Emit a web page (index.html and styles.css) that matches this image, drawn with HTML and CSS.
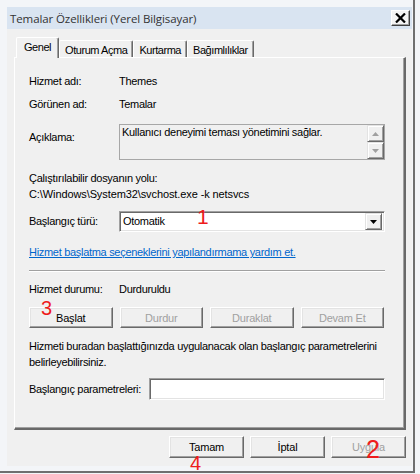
FILE: index.html
```html
<!DOCTYPE html>
<html lang="tr">
<head>
    <meta charset="UTF-8">
    <title>Temalar Özellikleri (Yerel Bilgisayar)</title>
    <link rel="stylesheet" href="styles.css">
</head>
<body>
    <div class="window">
        <div class="titlebar">
            <span class="title">Temalar Özellikleri (Yerel Bilgisayar)</span>
            <button class="close">
                <svg width="11" height="10" viewBox="0 0 11 10"><path d="M1 0.5 L10 9.5 M10 0.5 L1 9.5" stroke="#000" stroke-width="2.2"/></svg>
            </button>
        </div>

        <div class="client">
            <div class="tabs">
                <div class="tab active">Genel</div>
                <div class="tab">Oturum Açma</div>
                <div class="tab">Kurtarma</div>
                <div class="tab">Bağımlılıklar</div>
            </div>

            <div class="panel">
                <div class="row first">
                    <span class="label">Hizmet adı:</span>
                    <span>Themes</span>
                </div>
                <div class="row second">
                    <span class="label">Görünen ad:</span>
                    <span>Temalar</span>
                </div>
                <div class="row desc-row">
                    <span class="label desc-label">Açıklama:</span>
                    <div class="desc">
                        <div class="desc-text">Kullanıcı deneyimi teması yönetimini sağlar.</div>
                        <div class="scrollbar">
                            <div class="sb-btn"><svg width="7" height="4" viewBox="0 0 7 4"><path d="M3.5 0 L7 4 L0 4 Z" fill="#a0a0a0"/></svg></div>
                            <div class="sb-btn"><svg width="7" height="4" viewBox="0 0 7 4"><path d="M0 0 L7 0 L3.5 4 Z" fill="#a0a0a0"/></svg></div>
                        </div>
                    </div>
                </div>

                <div class="path-label">Çalıştırılabilir dosyanın yolu:</div>
                <div class="path">C:\Windows\System32\svchost.exe -k netsvcs</div>

                <div class="row combo-row">
                    <span class="label">Başlangıç türü:</span>
                    <div class="combo">
                        <span class="combo-value">Otomatik</span>
                        <div class="combo-btn"><svg width="7" height="4" viewBox="0 0 7 4"><path d="M0 0 L7 0 L3.5 4 Z" fill="#000"/></svg></div>
                    </div>
                </div>

                <a class="help-link" href="#">Hizmet başlatma seçeneklerini yapılandırmama yardım et.</a>

                <div class="separator"></div>

                <div class="row status">
                    <span class="label">Hizmet durumu:</span>
                    <span>Durduruldu</span>
                </div>

                <div class="service-buttons">
                    <button class="btn">Başlat</button>
                    <button class="btn" disabled>Durdur</button>
                    <button class="btn" disabled>Duraklat</button>
                    <button class="btn" disabled>Devam Et</button>
                </div>

                <p class="hint">Hizmeti buradan başlattığınızda uygulanacak olan başlangıç parametrelerini<br>belirleyebilirsiniz.</p>

                <div class="row params">
                    <span class="params-label">Başlangıç parametreleri:</span>
                    <div class="param-input"></div>
                </div>
            </div>

            <div class="dialog-buttons">
                <button class="btn dlg">Tamam</button>
                <button class="btn dlg">İptal</button>
                <button class="btn dlg" disabled>Uygula</button>
            </div>
        </div>

        <span class="mark m1">1</span>
        <span class="mark m2">2</span>
        <span class="mark m3">3</span>
        <span class="mark m4">4</span>
    </div>
</body>
</html>
```

FILE: styles.css
```css
body {
    margin: 0;
    background: #f3f5f8;
    font-family: "Liberation Sans", Arial, sans-serif;
    font-size: 11px;
    letter-spacing: -0.3px;
    color: #000;
}
.window {
    position: relative;
    width: 415px;
    height: 473px;
    box-sizing: border-box;
    padding: 7px 1px 5px 7px;
    background: #f3f5f8;
    border-right: 2px solid #6f6f6f;
    border-bottom: 2px solid #6f6f6f;
}
.titlebar {
    height: 22px;
    background: #d9e4f1;
    display: flex;
    align-items: center;
    justify-content: space-between;
    padding: 0 2px 0 3px;
}
.title {
    font-family: "Open Sans", "Noto Sans", sans-serif;
    font-size: 11.5px;
    color: #333;
    letter-spacing: -0.1px;
}
.close {
    width: 19px;
    height: 16px;
    padding: 0;
    display: flex;
    align-items: center;
    justify-content: center;
    background: #f4f4f4;
    border: 1px solid;
    border-color: #fff #404040 #404040 #fff;
    box-shadow: inset -1px -1px #a0a0a0;
}
.client {
    height: 437px;
    box-sizing: border-box;
    background: #f0f0f0;
    padding: 8px 6px 0 7px;
}
.tabs {
    display: flex;
    align-items: flex-end;
    height: 20px;
    padding-left: 2px;
}
.tab {
    height: 17px;
    line-height: 18px;
    padding: 0 5px;
    letter-spacing: -0.45px;
    border: 1px solid;
    border-color: #fff #696969 transparent #fff;
    border-bottom: none;
    border-radius: 2px 2px 0 0;
    box-sizing: border-box;
    box-shadow: inset -1px 0 #a0a0a0;
    background: #f0f0f0;
}
.tab.active {
    position: relative;
    z-index: 1;
    height: 21px;
    line-height: 18px;
    margin-bottom: -1px;
    padding: 0 7px;
}
.panel {
    height: 373px;
    box-sizing: border-box;
    border: 1px solid;
    border-color: #fff #696969 #696969 #fff;
    border-width: 1px 2px 2px 1px;
    box-shadow: inset -1px -1px #a0a0a0;
    padding: 0 19px 0 14px;
    display: flex;
    flex-direction: column;
}
.row {
    display: flex;
    line-height: 16px;
}
.label {
    width: 90px;
    flex-shrink: 0;
}
.first { margin-top: 15px; }
.second { margin-top: 7px; }
.desc-row {
    margin-top: 12px;
    align-items: flex-start;
}
.desc-label { padding-top: 5px; }
.desc {
    flex: 1;
    height: 36px;
    box-sizing: border-box;
    display: flex;
    border: 1px solid #a7a7a7;
    background: #f0f0f0;
}
.desc-text {
    flex: 1;
    padding: 0 2px;
    line-height: 14px;
}
.scrollbar {
    width: 17px;
    display: flex;
    flex-direction: column;
}
.sb-btn, .combo-btn {
    flex: 1;
    display: flex;
    align-items: center;
    justify-content: center;
    box-sizing: border-box;
    background: #f0f0f0;
    border: 1px solid;
    border-color: #e3e3e3 #696969 #696969 #e3e3e3;
    box-shadow: inset 1px 1px #fff, inset -1px -1px #a0a0a0;
}
.path-label {
    margin-top: 10px;
    line-height: 16px;
}
.path {
    line-height: 16px;
    letter-spacing: -0.1px;
}
.combo-row {
    margin-top: 9px;
    align-items: center;
    line-height: 21px;
}
.combo, .param-input {
    flex: 1;
    height: 21px;
    box-sizing: border-box;
    display: flex;
    align-items: center;
    background: #fff;
    border: 1px solid;
    border-color: #a0a0a0 #fff #fff #a0a0a0;
    box-shadow: inset 1px 1px #696969, inset -1px -1px #e3e3e3;
    padding: 2px;
}
.combo-value {
    flex: 1;
    padding-left: 1px;
}
.combo-btn {
    flex: none;
    width: 17px;
    height: 17px;
}
.help-link {
    margin-top: 12px;
    line-height: 16px;
    color: #0066cc;
    align-self: flex-start;
}
.separator {
    margin-top: 10px;
    height: 1px;
    background: #a0a0a0;
    border-bottom: 1px solid #fff;
}
.status { margin-top: 9px; }
.service-buttons {
    margin-top: 10px;
    display: grid;
    grid-template-columns: repeat(4, 1fr);
    gap: 7px;
    padding-right: 1px;
}
.btn {
    height: 21px;
    padding: 0;
    font-family: inherit;
    font-size: 11px;
    letter-spacing: -0.2px;
    color: #000;
    background: #f0f0f0;
    border: 1px solid;
    border-color: #fff #696969 #696969 #fff;
    box-shadow: inset -1px -1px #a0a0a0, inset 1px 1px #e3e3e3;
}
.btn:disabled { color: #a0a0a0; }
.hint {
    margin: 10px 0 0;
    line-height: 16px;
    white-space: nowrap;
}
.params {
    margin-top: 8px;
    align-items: center;
    line-height: 21px;
}
.params-label { width: 120px; }
.param-input { height: 22px; }
.dialog-buttons {
    margin-top: 6px;
    display: flex;
    justify-content: flex-end;
    gap: 6px;
}
.btn.dlg {
    width: 75px;
    height: 22px;
}
.mark {
    position: absolute;
    font-family: "Liberation Sans", Arial, sans-serif;
    color: #ee1c1c;
    line-height: 1;
    letter-spacing: 0;
}
.m1 { left: 197px; top: 206px; font-size: 21px; }
.m2 { left: 366px; top: 437px; font-size: 25px; }
.m3 { left: 41px; top: 298px; font-size: 20px; }
.m4 { left: 190px; top: 453px; font-size: 20px; }
```
